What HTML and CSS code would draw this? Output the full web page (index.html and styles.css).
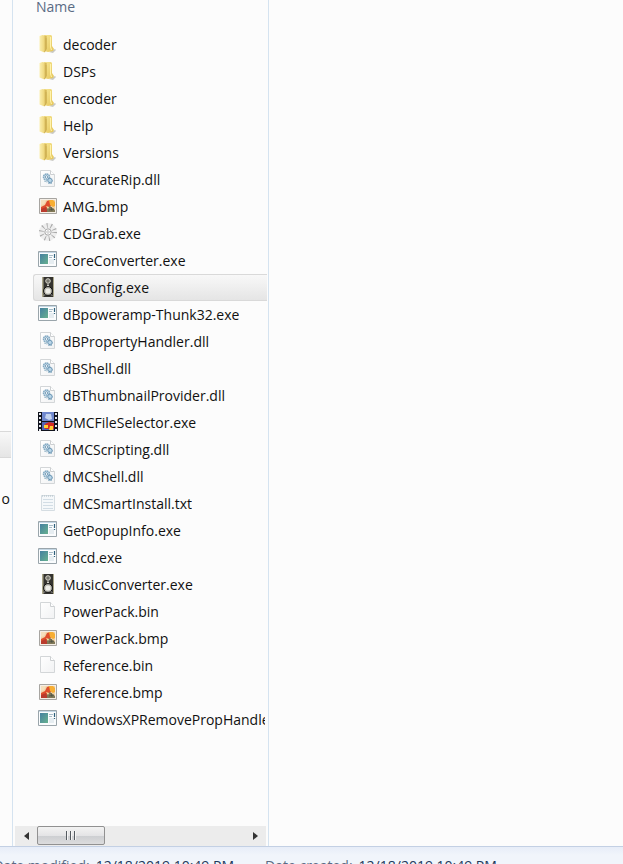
FILE: index.html
```
<!DOCTYPE html>
<html lang="en">
<head>
    <meta charset="UTF-8">
    <meta name="viewport" content="width=device-width, initial-scale=1.0">
    <title>File Browser</title>
    <link rel="stylesheet" href="styles.css">
</head>
<body>

<!-- Shared icons -->
<svg class="icon-defs" width="0" height="0" aria-hidden="true">
    <defs>
        <linearGradient id="folder-front" x1="0" x2="1" y1="0" y2="0">
            <stop offset="0" stop-color="#fbefb0"/>
            <stop offset="0.6" stop-color="#f0da82"/>
            <stop offset="1" stop-color="#c9a743"/>
        </linearGradient>
        <linearGradient id="folder-back" x1="0" x2="1" y1="0" y2="1">
            <stop offset="0" stop-color="#f7e796"/>
            <stop offset="1" stop-color="#e5c558"/>
        </linearGradient>
        <linearGradient id="teal" x1="0" x2="1" y1="0" y2="1">
            <stop offset="0" stop-color="#4480a0"/>
            <stop offset="1" stop-color="#67b18f"/>
        </linearGradient>
        <linearGradient id="paper" x1="0" x2="1" y1="0" y2="1">
            <stop offset="0" stop-color="#ffffff"/>
            <stop offset="1" stop-color="#f1f2f3"/>
        </linearGradient>
    </defs>
    <symbol id="folder" viewBox="0 0 20 20">
        <path d="M11 18l6-3 1 1-3 3z" fill="#c9c9c4"/>
        <path d="M6 1h7l1 1v10l2 3-1 2-5 1-4-1z" fill="url(#folder-back)"/>
        <path d="M1.500 2l3-1 4 1v13l-2 3.500-5-2z" fill="url(#folder-front)"/>
        <path d="M8 4v11l-1.500 3" fill="none" stroke="#c8a94f" stroke-width=".8"/>
        <path d="M12.500 3v10l1 3" fill="none" stroke="#fff3ad" stroke-width="1"/>
    </symbol>
    <symbol id="page" viewBox="0 0 20 20">
        <path d="M2.500 1.500h10l4 4v12h-14z" fill="url(#paper)" stroke="#d3d6d8"/>
        <path d="M12.500 1.500v4h4" fill="#fff" stroke="#cccfd1"/>
    </symbol>
    <symbol id="dll" viewBox="0 0 20 20">
        <use href="#page"/>
        <circle cx="8.500" cy="8" r="3" fill="#d8eaf5" stroke="#83a9c2" stroke-width="1.500" stroke-dasharray="1.600 .4"/>
        <circle cx="8.500" cy="8" r="1.300" fill="#fff" stroke="#5986a6" stroke-width=".8"/>
        <circle cx="12" cy="11.500" r="2.200" fill="#b9d6e8" stroke="#6994b2" stroke-width="1.200" stroke-dasharray="1.200 .3"/>
        <path d="M6 12l3 1M10 14.500l4 0" stroke="#a7c1d1"/>
    </symbol>
    <symbol id="txt" viewBox="0 0 20 20">
        <path d="M3.500 2.500h13v15h-13z" fill="#f5f8fa" stroke="#d5dde2"/>
        <path d="M4 3h12" stroke="#aebcc5" stroke-dasharray="1 1"/>
        <path d="M5 6.500h10M5 9.500h10M5 12.500h10M5 15.500h10" stroke="#d2dde5"/>
    </symbol>
    <symbol id="bmp" viewBox="0 0 20 20">
        <path d="M1.500 2.500h17v15h-17z" fill="#f5eee5" stroke="#a7a5a1"/>
        <path d="M3 4h14v12H3z" fill="#f1d2a7"/>
        <path d="M3 11l4-2 2-4 3-1 3 3-4 5-8 3z" fill="#df4e2d"/>
        <path d="M11 4h4l2 2v4l-2 1-3-2z" fill="#f7ae33"/>
        <path d="M3 13l5-2 2 5H3z" fill="#b93b2d"/>
        <path d="M9 12l3-2 5 4v2H9z" fill="#817957"/>
        <path d="M3 4h5l-2 4-3 1z" fill="#f5dfbd"/>
        <path d="M8 10l3 1-1 2z" fill="#f5e6a6"/>
        <path d="M13 11l1 4M11 14l5-1" stroke="#4d5245" stroke-width=".8"/>
    </symbol>
    <symbol id="disc" viewBox="0 0 20 20">
        <circle cx="10" cy="9" r="6.500" fill="none" stroke="#eeeeee" stroke-width="5"/>
        <circle cx="10" cy="9" r="6.500" fill="none" stroke="#a9a9a9" stroke-width="5" stroke-dasharray=".9 3.184"/>
        <circle cx="10" cy="9" r="3.200" fill="#fff" stroke="#a2a2a2"/>
        <circle cx="10" cy="9" r="1.300" fill="#f5f5f5" stroke="#b5b5b5" stroke-width=".7"/>
    </symbol>
    <symbol id="app" viewBox="0 0 20 20">
        <path d="M.5 1.500h18v15H.5z" fill="#fafcfd" stroke="#9aa5ab"/>
        <path d="M1 2.500h17" stroke="#c4d7e4"/>
        <path d="M2 4h8v10H2z" fill="url(#teal)"/>
        <path d="M11 5.500h4M11 7.500h3" stroke="#a9bdc9"/>
        <path d="M11 9h5v5h-5z" fill="#e6edf1"/>
        <path d="M16.500 4v4M16.500 9v1" stroke="#2f607b" stroke-width="1.200"/>
    </symbol>
    <symbol id="speaker" viewBox="0 0 20 20">
        <path d="M4 0h12v20H4z" fill="#34332f"/>
        <path d="M4 0h1.500v20H4zM15 0h1v20h-1z" fill="#aaa68a"/>
        <circle cx="10" cy="4" r="2.300" fill="#77766e" stroke="#d7d5ca"/>
        <path d="M9 7.500h2v2H9z" fill="#d1d0c8"/>
        <circle cx="10" cy="14" r="4.400" fill="#b9b8b0" stroke="#111"/>
        <circle cx="10" cy="14" r="2.600" fill="#eeede8"/>
        <path d="M6 18.500l1-1M14 18.500l-1-1" stroke="#eee"/>
    </symbol>
    <symbol id="film" viewBox="0 0 20 20">
        <path d="M0 0h20v19H0z" fill="#11141e"/>
        <path d="M2 1v18M18 1v18" stroke="#e7e9ef" stroke-width="2" stroke-dasharray="2 2"/>
        <path d="M4 0h12v9H4z" fill="#6f87cd"/>
        <path d="M8 2h5l1 5-3 1-4-2z" fill="#c5d4ef"/>
        <path d="M4 10h12v8H4z" fill="#5265b6"/>
        <path d="M7 12l4-2 5 1v6H7z" fill="#d52d23"/>
        <path d="M6 13h4v3H6zM12 14h3v4h-4z" fill="#ffcf37"/>
    </symbol>
</svg>

<main class="browser">
    <section class="column column-prev">
        <div class="prev-item selected"></div>
        <div class="prev-item"></div>
        <div class="prev-item">o</div>
    </section>

    <section class="column column-files">
        <button class="column-header">Name</button>
        <ul class="file-list">
            <li><button class="file"><svg class="icon"><use href="#folder"/></svg><span class="name">decoder</span></button></li>
            <li><button class="file"><svg class="icon"><use href="#folder"/></svg><span class="name">DSPs</span></button></li>
            <li><button class="file"><svg class="icon"><use href="#folder"/></svg><span class="name">encoder</span></button></li>
            <li><button class="file"><svg class="icon"><use href="#folder"/></svg><span class="name">Help</span></button></li>
            <li><button class="file"><svg class="icon"><use href="#folder"/></svg><span class="name">Versions</span></button></li>
            <li><button class="file"><svg class="icon"><use href="#dll"/></svg><span class="name">AccurateRip.dll</span></button></li>
            <li><button class="file"><svg class="icon"><use href="#bmp"/></svg><span class="name">AMG.bmp</span></button></li>
            <li><button class="file"><svg class="icon"><use href="#disc"/></svg><span class="name">CDGrab.exe</span></button></li>
            <li><button class="file"><svg class="icon"><use href="#app"/></svg><span class="name">CoreConverter.exe</span></button></li>
            <li><button class="file selected"><svg class="icon"><use href="#speaker"/></svg><span class="name">dBConfig.exe</span></button></li>
            <li><button class="file"><svg class="icon"><use href="#app"/></svg><span class="name">dBpoweramp-Thunk32.exe</span></button></li>
            <li><button class="file"><svg class="icon"><use href="#dll"/></svg><span class="name">dBPropertyHandler.dll</span></button></li>
            <li><button class="file"><svg class="icon"><use href="#dll"/></svg><span class="name">dBShell.dll</span></button></li>
            <li><button class="file"><svg class="icon"><use href="#dll"/></svg><span class="name">dBThumbnailProvider.dll</span></button></li>
            <li><button class="file"><svg class="icon"><use href="#film"/></svg><span class="name">DMCFileSelector.exe</span></button></li>
            <li><button class="file"><svg class="icon"><use href="#dll"/></svg><span class="name">dMCScripting.dll</span></button></li>
            <li><button class="file"><svg class="icon"><use href="#dll"/></svg><span class="name">dMCShell.dll</span></button></li>
            <li><button class="file"><svg class="icon"><use href="#txt"/></svg><span class="name">dMCSmartInstall.txt</span></button></li>
            <li><button class="file"><svg class="icon"><use href="#app"/></svg><span class="name">GetPopupInfo.exe</span></button></li>
            <li><button class="file"><svg class="icon"><use href="#app"/></svg><span class="name">hdcd.exe</span></button></li>
            <li><button class="file"><svg class="icon"><use href="#speaker"/></svg><span class="name">MusicConverter.exe</span></button></li>
            <li><button class="file"><svg class="icon"><use href="#page"/></svg><span class="name">PowerPack.bin</span></button></li>
            <li><button class="file"><svg class="icon"><use href="#bmp"/></svg><span class="name">PowerPack.bmp</span></button></li>
            <li><button class="file"><svg class="icon"><use href="#page"/></svg><span class="name">Reference.bin</span></button></li>
            <li><button class="file"><svg class="icon"><use href="#bmp"/></svg><span class="name">Reference.bmp</span></button></li>
            <li><button class="file"><svg class="icon"><use href="#app"/></svg><span class="name">WindowsXPRemovePropHandler.exe</span></button></li>
        </ul>
        <div class="scrollbar">
            <button class="scroll-arrow" aria-label="Scroll left">
                <svg width="5" height="8" viewBox="0 0 5 8"><path d="M5 0v8L0 4z" fill="#333"/></svg>
            </button>
            <div class="scroll-track">
                <button class="scroll-thumb" aria-label="Scroll position">
                    <svg width="12" height="9" viewBox="0 0 12 9"><path d="M1.500 0v9M5.500 0v9M9.500 0v9" stroke="#555b61"/><path d="M2.500 0v9M6.500 0v9M10.500 0v9" stroke="#f5f5f5"/></svg>
                </button>
            </div>
            <button class="scroll-arrow" aria-label="Scroll right">
                <svg width="5" height="8" viewBox="0 0 5 8"><path d="M0 0v8l5-4z" fill="#333"/></svg>
            </button>
        </div>
    </section>

    <section class="column-preview"></section>
</main>

<footer class="details">
    <div class="detail detail-modified"><span class="label">Date modified:</span><span>12/18/2019 10:49 PM</span></div>
    <div class="detail"><span class="label">Date created:</span><span>12/18/2019 10:49 PM</span></div>
</footer>

</body>
</html>
```
FILE: styles.css
```
* {
    box-sizing: border-box;
}

body {
    margin: 0;
    height: 100vh;
    display: flex;
    flex-direction: column;
    overflow: hidden;
    background-color: #fcfcfc;
    color: #111;
    font-family: "Open Sans", "Noto Sans", sans-serif;
    font-size: 14px;
}

button {
    margin: 0;
    padding: 0;
    border: none;
    background: none;
    color: inherit;
    font: inherit;
    text-align: left;
}

.icon-defs {
    flex: none;
}

/* Columns */
.browser {
    flex: 1;
    min-height: 0;
    display: grid;
    grid-template-columns: 13px 256px 1fr;
}

.column {
    display: flex;
    flex-direction: column;
    min-width: 0;
    border-right: 1px solid #d5e3f0;
}

.column-prev {
    padding-top: 431px;
}

.prev-item {
    display: flex;
    align-items: center;
    justify-content: flex-end;
    height: 27px;
    padding-right: 2px;
    overflow: hidden;
}

.prev-item.selected {
    margin-right: 1px;
    border: 1px solid #d9d9d9;
    border-left: none;
    border-right: none;
    background: linear-gradient(#f8f8f8, #e5e5e5);
}

.column-header {
    height: 31px;
    padding-left: 23px;
    padding-bottom: 17px;
    line-height: 14px;
    color: #5a6b84;
}

/* File list */
.file-list {
    flex: 1;
    margin: 0;
    padding: 0 1px 0 20px;
    list-style: none;
}

.file {
    display: flex;
    align-items: center;
    gap: 5px;
    width: 100%;
    height: 27px;
    padding: 0 2px 0 5px;
    white-space: nowrap;
}

.file.selected {
    padding-left: 4px;
    border: 1px solid #d9d9d9;
    border-right: none;
    border-radius: 3px 0 0 3px;
    background: linear-gradient(#f8f8f8, #e5e5e5);
}

.name {
    min-width: 0;
    overflow: hidden;
}

.icon {
    flex: none;
    width: 20px;
    height: 20px;
    margin-bottom: 1px;
}

/* Horizontal scrollbar */
.scrollbar {
    display: flex;
    height: 20px;
    margin: 0 2px;
    background-color: #ececec;
}

.scroll-arrow {
    display: flex;
    align-items: center;
    justify-content: center;
    width: 22px;
}

.scroll-track {
    flex: 1;
}

.scroll-thumb {
    display: flex;
    align-items: center;
    justify-content: center;
    width: 68px;
    height: 19px;
    border: 1px solid #919191;
    border-radius: 2px;
    background: linear-gradient(#f3f3f3 0%, #e4e4e6 50%, #ccced1 51%, #dcdcdd 100%);
}

/* Details pane */
.details {
    flex: none;
    display: flex;
    gap: 31px;
    height: 18px;
    padding-top: 9px;
    overflow: hidden;
    border-top: 1px solid #c3d0e4;
    background: linear-gradient(#e7edf8, #f1f5fb 8px);
    color: #1e395b;
    line-height: 20px;
}

.detail {
    display: flex;
    gap: 6px;
    white-space: nowrap;
}

.detail-modified {
    width: 234px;
    justify-content: flex-end;
}

.label {
    color: #5a6b84;
}
```
